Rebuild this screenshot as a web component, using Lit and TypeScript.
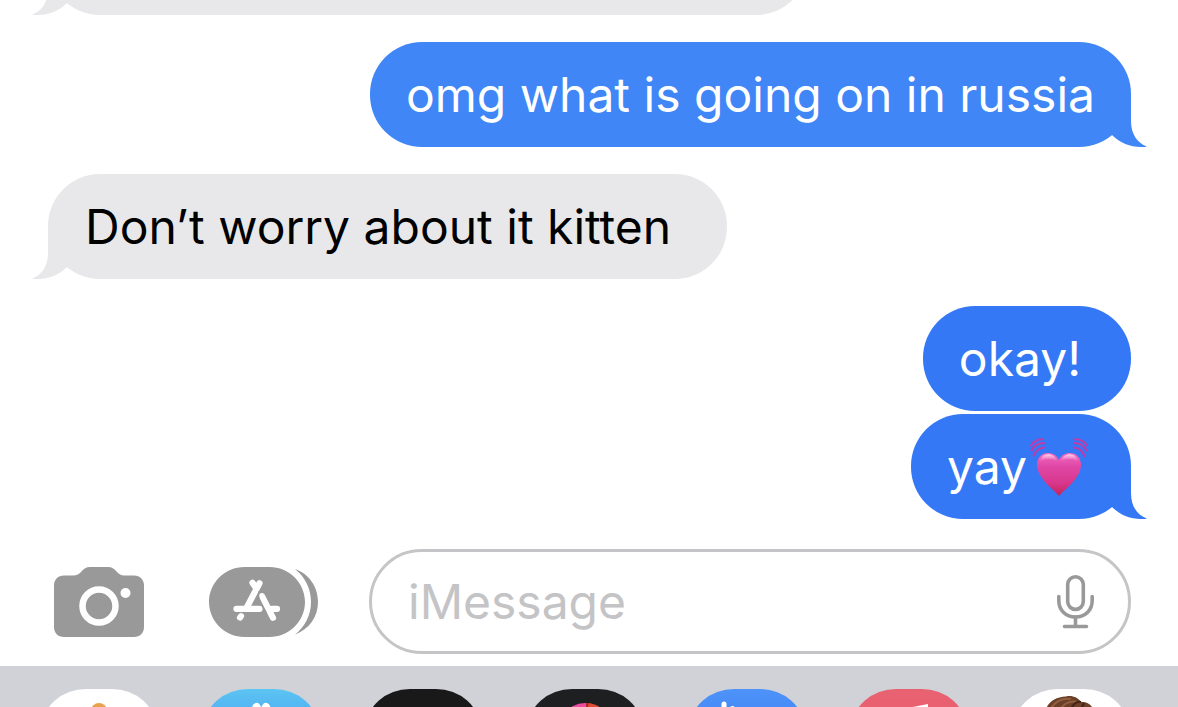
import { LitElement, html, css, svg, nothing } from "lit";
import { customElement, property } from "lit/decorators.js";

const beatingHeart = html`
  <svg class="emoji" viewBox="0 0 58 58" role="img" aria-label="beating heart">
    <defs>
      <linearGradient id="heart-fill" x1="0" y1="0" x2="0" y2="1">
        <stop offset="0" stop-color="#f06cc0" />
        <stop offset="0.3" stop-color="#e048a8" />
        <stop offset="0.7" stop-color="#d8378c" />
        <stop offset="1" stop-color="#c22358" />
      </linearGradient>
      <linearGradient id="heart-shine" x1="0" y1="0" x2="0" y2="1">
        <stop offset="0" stop-color="#ffe3f6" stop-opacity="0.9" />
        <stop offset="1" stop-color="#f38ccb" stop-opacity="0" />
      </linearGradient>
    </defs>
    <g fill="none" stroke="#c03aa8" stroke-width="2" stroke-linecap="round">
      <path d="M1 7.500C3.500 3.500 8 1 13 1.200M1.500 12.500C4 8 8.500 5 14 5M3.500 18C5.500 13 9.500 10 14 9.500" />
      <path d="M57 7.500C54.500 3.500 50 1 45 1.200M56.500 12.500C54 8 49.500 5 44 5M54.500 18C52.500 13 48.500 10 44 9.500" />
    </g>
    <path
      fill="url(#heart-fill)"
      d="M29 58C25 52.500 7 41 7 26.500C7 19.500 12 15 18 15C23 15 27 17.500 29 22C31 17.500 35 15 40 15C46 15 51 19.500 51 26.500C51 41 33 52.500 29 58Z"
    />
    <path
      fill="url(#heart-shine)"
      d="M10 24C10.500 19 14 16.300 18 16.300C22.500 16.300 26 19 27 23C22 20 14 20 10 24ZM48 24C47.500 19 44 16.300 40 16.300C35.500 16.300 32 19 31 23C36 20 44 20 48 24Z"
    />
  </svg>
`;

const cameraIcon = html`
  <svg width="90" height="70" viewBox="0 0 90 70" aria-hidden="true">
    <path
      fill="#999"
      d="M10 8.500H19C23 8.500 25 7 27.500 4.500C30 1.500 32 0 36 0H54C58 0 60 1.500 62.500 4.500C65 7 67 8.500 70 8.500H80C86 8.500 90 12.500 90 18.500V60C90 66 86 70 80 70H10C4 70 0 66 0 60V18.500C0 12.500 4 8.500 10 8.500Z"
    />
    <circle cx="45" cy="39" r="16.500" fill="none" stroke="#fff" stroke-width="6.500" />
    <circle cx="71.500" cy="26" r="5" fill="#fff" />
  </svg>
`;

const appStoreIcon = html`
  <svg width="110" height="70" viewBox="0 0 110 71" preserveAspectRatio="none" aria-hidden="true">
    <path
      fill="#999"
      d="M35.500 0H60.500C80 0 96 16 96 35.500S80 71 60.500 71H35.500C16 71 0 55 0 35.500S16 0 35.500 0ZM86 2C100 7 109 20 109 35.500S100 63 86 68.500C96 60.500 102 49 102 35.500S96 10 86 2Z"
    />
    <g fill="none" stroke="#fff" stroke-width="6.200" stroke-linecap="round">
      <path d="M50.500 16.500L37.500 41.500M43.500 16L46.500 20.500" />
      <path d="M27.500 42.500H50.500" />
      <path d="M63 42.500H68" />
      <path d="M53 29.500L64 51.500" />
      <path d="M31 51.300L32 49.800" />
    </g>
    <path d="M50.200 24.500C48.800 29 49.200 32 51.500 36L57.500 47" fill="none" stroke="#999" stroke-width="1.500" />
  </svg>
`;

const micIcon = html`
  <svg width="37" height="54" viewBox="0 0 37 54" aria-hidden="true">
    <g fill="none" stroke="#999" stroke-width="3.600" stroke-linecap="round">
      <rect x="10.700" y="1.800" width="15.600" height="32.600" rx="7.800" />
      <path d="M1.800 21.500V25.500C1.800 35.500 9 42 18.500 42S35.200 35.500 35.200 25.500V21.500" />
      <path d="M18.500 42V51.500M7.500 51.500H29.500" />
    </g>
  </svg>
`;

interface DockApp {
  name: string;
  tone: string;
  art: unknown;
}

const dockApps: DockApp[] = [
  {
    name: "Photos",
    tone: "white",
    art: svg`<rect x="49" y="14" width="16" height="32" rx="8" fill="#e9a24a"/>`,
  },
  {
    name: "App Store",
    tone: "sky",
    art: svg`<path d="M52.500 18L66 42M62 18L45 48" stroke="#fff" stroke-width="8" stroke-linecap="round"/>`,
  },
  { name: "Fitness", tone: "black", art: nothing },
  {
    name: "Activity",
    tone: "charcoal",
    art: svg`<path d="M57 39L35 27A25 25 0 0 1 59 14Z" fill="#ee4aa0"/><path d="M57 39L59 14A25 25 0 0 1 81 29Z" fill="#e34a34"/><path d="M58 14L61 14.200L58 24Z" fill="#a92b25"/>`,
  },
  {
    name: "Audio",
    tone: "blue",
    art: svg`<path d="M34 15V60M42.500 19.500V50" stroke="#fff" stroke-width="5" stroke-linecap="round"/>`,
  },
  {
    name: "Music",
    tone: "rose",
    art: svg`<path d="M48 20.500L76 15V50H70V27L48 31Z" fill="#fff"/>`,
  },
  {
    name: "Memoji",
    tone: "white",
    art: svg`<path d="M31 36C27 22 35 8 52 7.500C58 6 64 8.500 67 13C76 12 83 20 81 36Z" fill="#6b3f28"/>
      <path d="M36 21C41 12 49 9 57 10M45 22C49 15 56 11 63 13" fill="none" stroke="#93603f" stroke-width="2"/>
      <path d="M57 20C60 14 63 12 67 13M68 18L70 14" fill="none" stroke="#402216" stroke-width="2"/>`,
  },
];

@customElement("chat-bubble")
class ChatBubble extends LitElement {
  @property({ reflect: true }) side = "sent";
  @property({ type: Boolean }) tail = false;

  static styles = css`
    :host {
      display: block;
      position: relative;
      box-sizing: border-box;
      flex: none;
      align-self: flex-end;
      max-width: 76%;
      min-height: 105px;
      padding: 22px 36px;
      border-radius: 52px;
      background: var(--bubble, #3478f6);
      color: #fff;
      font-size: 48px;
      line-height: 61px;
    }
    :host([side="received"]) {
      align-self: flex-start;
      padding-left: 37px;
      background: #e8e8ea;
      color: #000;
    }
    .tail {
      position: absolute;
      right: -16px;
      bottom: 0;
      width: 40px;
      height: 50px;
      fill: var(--bubble, #3478f6);
    }
    :host([side="received"]) .tail {
      right: auto;
      left: -16px;
      transform: scaleX(-1);
      fill: #e8e8ea;
    }
  `;

  render() {
    return html`<slot></slot>${this.tail
        ? html`<svg class="tail" viewBox="0 0 40 50" aria-hidden="true">
            <path d="M24 0V24C24 37 30 46 40 49.500C39 50 36 50 34 50C23 50 13 46 5 38L0 30V0Z" />
          </svg>`
        : nothing}`;
  }
}

@customElement("app-root")
class AppRoot extends LitElement {
  static styles = css`
    :host {
      display: flex;
      flex-direction: column;
      height: 100vh;
      overflow: hidden;
      background: #fff;
      font-family: Inter, "Liberation Sans", sans-serif;
    }
    .thread {
      flex: 1;
      min-height: 0;
      display: flex;
      flex-direction: column;
      justify-content: flex-end;
      gap: 27px;
      overflow: hidden;
      padding: 0 47px 30px 48px;
    }
    .group {
      display: flex;
      flex-direction: column;
      flex: none;
      gap: 3px;
    }
    .earlier {
      width: 760px;
    }
    .upper {
      --bubble: #4086f6;
    }
    .reply {
      padding-right: 56px;
    }
    .roomy {
      padding-right: 50px;
    }
    .with-emoji {
      padding-right: 43px;
    }
    .line {
      display: flex;
      align-items: center;
      gap: 3px;
    }
    .emoji {
      width: 58px;
      height: 58px;
    }
    .composer {
      display: flex;
      align-items: center;
      padding: 0 47px 12px 54px;
    }
    button {
      display: block;
      flex: none;
      margin: 0;
      padding: 0;
      border: 0;
      background: none;
    }
    svg {
      display: block;
    }
    .camera {
      margin-right: 65px;
    }
    .apps {
      margin-right: 50px;
    }
    .field {
      flex: 1;
      min-width: 0;
      box-sizing: border-box;
      height: 105px;
      display: flex;
      align-items: center;
      padding: 0 34px 0 36px;
      border: 3px solid #c5c5c7;
      border-radius: 53px;
    }
    input {
      flex: 1;
      min-width: 0;
      padding: 0;
      border: 0;
      outline: 0;
      background: none;
      font: inherit;
      font-size: 48px;
      line-height: 61px;
      color: #000;
    }
    input::placeholder {
      color: #c4c4c6;
      opacity: 1;
    }
    .dock {
      flex: none;
      display: flex;
      gap: 48px;
      box-sizing: border-box;
      height: 41px;
      overflow: hidden;
      padding: 23px 42px 0;
      background: #d1d2d8;
    }
    .app {
      width: 114px;
      height: 78px;
      border-radius: 44px / 39px;
      overflow: hidden;
    }
    .white {
      background: #fff;
    }
    .sky {
      background: linear-gradient(#5cc4f2, #3a8af5);
    }
    .black {
      background: #191919;
    }
    .charcoal {
      background: #1e1f21;
    }
    .blue {
      background: linear-gradient(#4e93f8, #3478f6);
    }
    .rose {
      background: linear-gradient(#e86372, #ec5468);
    }
  `;

  render() {
    return html`
      <main class="thread">
        <chat-bubble class="earlier" side="received" tail></chat-bubble>
        <chat-bubble class="upper" tail>omg what is going on in russia</chat-bubble>
        <chat-bubble class="reply" side="received" tail>Don’t worry about it kitten</chat-bubble>
        <div class="group">
          <chat-bubble class="roomy">okay!</chat-bubble>
          <chat-bubble class="with-emoji" tail><span class="line">yay${beatingHeart}</span></chat-bubble>
        </div>
      </main>
      <form class="composer" @submit=${(e: Event) => e.preventDefault()}>
        <button class="camera" type="button" aria-label="Camera">${cameraIcon}</button>
        <button class="apps" type="button" aria-label="Apps">${appStoreIcon}</button>
        <div class="field">
          <input type="text" placeholder="iMessage" aria-label="iMessage" />
          <button type="button" aria-label="Dictate">${micIcon}</button>
        </div>
      </form>
      <nav class="dock" aria-label="iMessage apps">
        ${dockApps.map(
          (app) => html`
            <button class="app ${app.tone}" type="button" aria-label=${app.name}>
              <svg width="114" height="78" viewBox="0 0 114 78" aria-hidden="true">${app.art}</svg>
            </button>
          `,
        )}
      </nav>
    `;
  }
}
